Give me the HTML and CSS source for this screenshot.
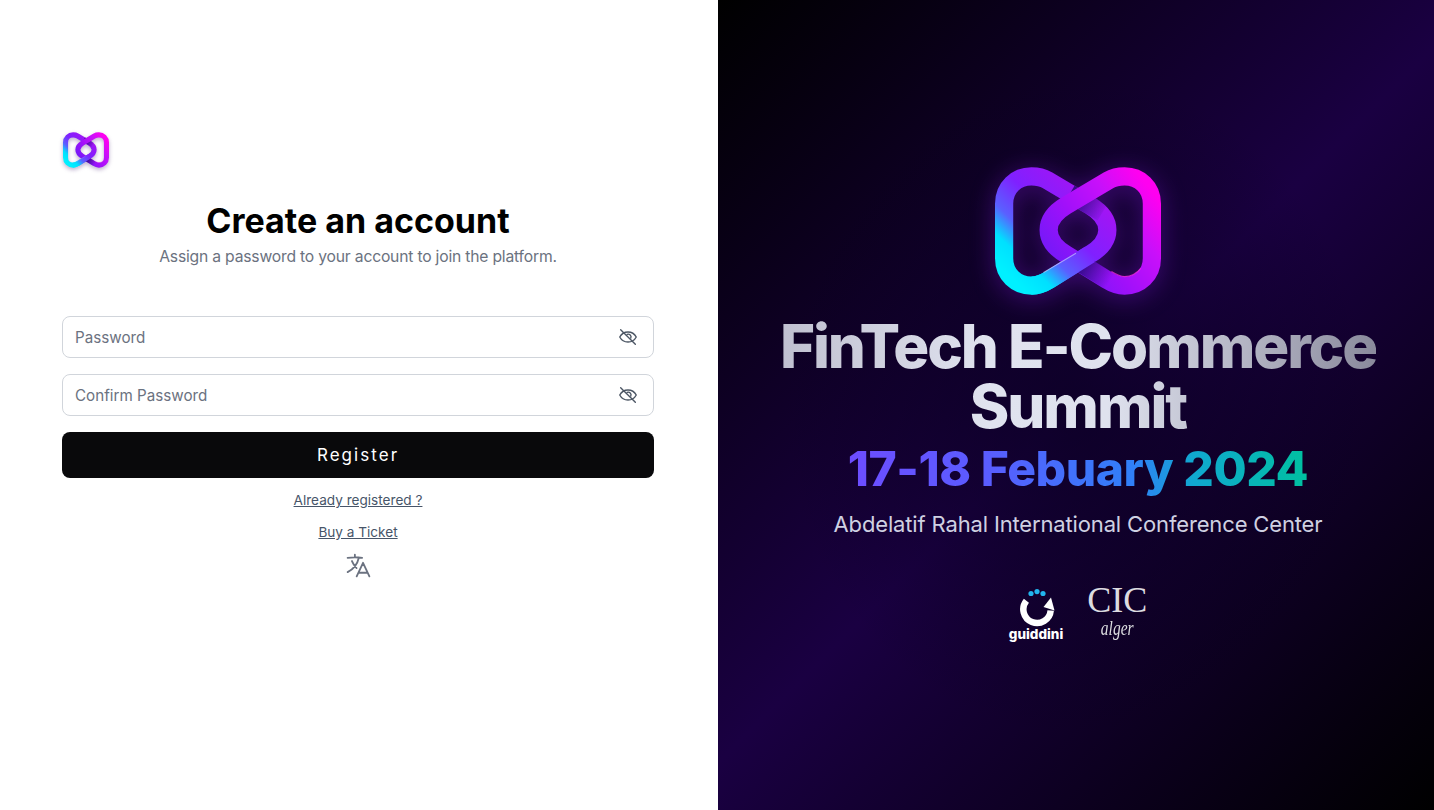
FILE: index.html
```html
<!DOCTYPE html>
<html lang="en">
<head>
  <meta charset="UTF-8" />
  <meta name="viewport" content="width=device-width, initial-scale=1.0"/>
  <title>Create an account</title>
  <link rel="stylesheet" href="styles.css">
</head>
<body>
  <svg class="defs" width="0" height="0">
    <defs>
      <linearGradient id="leftLoop" gradientUnits="userSpaceOnUse" x1="30" y1="125" x2="120" y2="30">
        <stop offset="0" stop-color="#00f0ff"/>
        <stop offset="0.16" stop-color="#00e0ff"/>
        <stop offset="0.32" stop-color="#5a60ff"/>
        <stop offset="0.55" stop-color="#8020ff"/>
        <stop offset="1" stop-color="#b010f0"/>
      </linearGradient>
      <linearGradient id="rightLoop" gradientUnits="userSpaceOnUse" x1="80" y1="110" x2="170" y2="40">
        <stop offset="0" stop-color="#7a18f8"/>
        <stop offset="0.32" stop-color="#a010fa"/>
        <stop offset="0.68" stop-color="#c810fa"/>
        <stop offset="1" stop-color="#ff00f0"/>
      </linearGradient>
      <linearGradient id="shadeTop" gradientUnits="userSpaceOnUse" x1="96" y1="48" x2="124" y2="66">
        <stop offset="0" stop-color="#240870" stop-opacity="0.85"/>
        <stop offset="1" stop-color="#240870" stop-opacity="0"/>
      </linearGradient>
      <linearGradient id="shadeBottom" gradientUnits="userSpaceOnUse" x1="102" y1="112" x2="130" y2="130">
        <stop offset="0" stop-color="#240870" stop-opacity="0.85"/>
        <stop offset="1" stop-color="#240870" stop-opacity="0"/>
      </linearGradient>
      <symbol id="logo" viewBox="16 18 164 126">
        <path fill="none" stroke="url(#leftLoop)" stroke-width="18" d="M25 54C25 38 37 27 52 27C58 27 63 28 68 31L110 56C120 62 127 70 127 80C127 90 120 98 110 104L70 129C62 134 58 135 52 135C37 135 25 124 25 108Z"/>
        <path fill="none" stroke="url(#shadeTop)" stroke-width="18" d="M90 44L122 63"/>
        <path fill="none" stroke="url(#rightLoop)" stroke-width="18" d="M171 54C171 38 159 27 144 27C138 27 133 28 128 31L86 56C76 62 69 70 69 80C69 90 76 98 86 104L126 129C134 134 138 135 144 135C159 135 171 124 171 108Z"/>
        <path fill="none" stroke="url(#shadeBottom)" stroke-width="18" d="M96 110L130 131"/>
        <path fill="none" stroke="#ff30e0" stroke-opacity="0.7" stroke-width="1.200" d="M131 121C136 124 140 126 144 126C150 126 156 123 160 118"/>
        <path fill="none" stroke="url(#leftLoop)" stroke-width="18" d="M52 135C58 135 62 134 70 129L110 104"/>
        <path fill="none" stroke="#e8d8ff" stroke-opacity="0.55" stroke-width="1" d="M64 122L96 103"/>
      </symbol>
      <symbol id="eyeOff" viewBox="0 0 24 24">
        <g fill="none" stroke="#4b5563" stroke-width="1.500" stroke-linecap="round" stroke-linejoin="round">
          <path d="M3 12c2-3.800 5-5.500 9-5.500s7 1.700 9 5.500c-2 3.800-5 5.500-9 5.500S5 15.800 3 12z"/>
          <path d="M11 9.200a3 3 0 0 1 4 4"/>
          <path d="M4 4l16 16"/>
        </g>
      </symbol>
    </defs>
  </svg>

  <main class="page">
    <section class="form-side">
      <svg class="logo-small"><use href="#logo"/></svg>
      <h1>Create an account</h1>
      <p class="subtitle">Assign a password to your account to join the platform.</p>

      <form class="form">
        <label class="field">
          <input type="password" placeholder="Password">
          <svg class="eye" viewBox="0 0 24 24"><use href="#eyeOff"/></svg>
        </label>
        <label class="field">
          <input type="password" placeholder="Confirm Password">
          <svg class="eye" viewBox="0 0 24 24"><use href="#eyeOff"/></svg>
        </label>
        <button type="button" class="register">Register</button>
      </form>

      <a class="link" href="#">Already registered ?</a>
      <a class="link" href="#">Buy a Ticket</a>
      <svg class="lang" viewBox="0 0 24 24" fill="none" stroke="#6b7280" stroke-width="1.500" stroke-linecap="round" stroke-linejoin="round">
        <path d="m10.500 21 5.250-11.250L21 21m-9-3h7.500M3 5.621a48.474 48.474 0 0 1 6-.371m0 0c1.120 0 2.233.038 3.334.114M9 5.250V3m3.334 2.364C11.176 10.658 7.690 15.080 3 17.502m9.334-12.138c.896.061 1.785.147 2.666.257m-4.589 8.495a18.023 18.023 0 0 1-3.827-5.802"/>
      </svg>
    </section>

    <section class="event-side">
      <svg class="logo-big"><use href="#logo"/></svg>
      <h2 class="event-title">FinTech E-Commerce<br>Summit</h2>
      <p class="event-date">17-18 Febuary 2024</p>
      <p class="event-place">Abdelatif Rahal International Conference Center</p>
      <div class="partners">
        <div class="guiddini">
          <svg class="guiddini-mark" viewBox="0 0 40 38">
            <circle cx="15" cy="4.500" r="2.600" fill="#22b5ee"/>
            <circle cx="21" cy="2.600" r="2.600" fill="#22b5ee"/>
            <circle cx="27" cy="4.500" r="2.600" fill="#22b5ee"/>
            <path fill="none" stroke="#fff" stroke-width="6.500" d="M10.400 11.700A13.700 13.700 0 1 0 34.700 21.500"/>
            <path fill="#fff" d="M27.500 18L35 8.500l3.500 13z"/>
          </svg>
          <span class="guiddini-name">guiddini</span>
        </div>
        <div class="cic">
          <span class="cic-name">CIC</span>
          <span class="cic-city">alger</span>
        </div>
      </div>
    </section>
  </main>
</body>
</html>
```

FILE: styles.css
```css
* {
  box-sizing: border-box;
}

body {
  margin: 0;
  background-color: #fff;
  font-family: Inter, "Liberation Sans", sans-serif;
}

.defs {
  position: absolute;
}

.page {
  display: grid;
  grid-template-columns: 718px 716px;
  height: 810px;
  overflow: hidden;
}

/* left side */
.form-side {
  display: flex;
  flex-direction: column;
  align-items: center;
  padding: 132px 64px 0 62px;
}

.logo-small {
  align-self: flex-start;
  width: 46px;
  height: 36px;
  margin-left: 1px;
  filter: drop-shadow(0 2px 2px rgba(60, 20, 110, 0.35));
}

h1 {
  margin: 32px 0 0;
  font-size: 34px;
  line-height: 42px;
  font-weight: 700;
  color: #000;
}

.subtitle {
  margin: 3px 0 0;
  font-size: 15.7px;
  letter-spacing: -0.2px;
  line-height: 24px;
  color: #6b7280;
}

.form {
  display: flex;
  flex-direction: column;
  gap: 16px;
  width: 100%;
  margin-top: 47px;
}

.field {
  display: flex;
  align-items: center;
  height: 42px;
  padding: 0 14px 0 12px;
  background-color: #fff;
  border: 1px solid #d1d5db;
  border-radius: 8px;
}

.field input {
  flex: 1;
  border: 0;
  outline: 0;
  padding: 0;
  font-family: inherit;
  font-size: 15.2px;
  color: #111827;
}

.field input::placeholder {
  color: #6b7280;
  opacity: 1;
}

.eye {
  width: 22px;
  height: 22px;
}

.register {
  height: 46px;
  border: 0;
  border-radius: 8px;
  background-color: #09090b;
  color: #fff;
  font-family: inherit;
  font-size: 17px;
  font-weight: 400;
  letter-spacing: 0.12em;
}

.link {
  margin-top: 12px;
  font-size: 13.6px;
  line-height: 20px;
  color: #475569;
}

.lang {
  width: 29px;
  height: 29px;
  margin-top: 9px;
}

/* right side */
.event-side {
  display: flex;
  flex-direction: column;
  align-items: center;
  justify-content: center;
  padding: 0 0 3px 4px;
  background-color: #000;
  background-image:
    radial-gradient(ellipse at center, rgba(8, 0, 28, 0.65), rgba(8, 0, 28, 0) 58%),
    linear-gradient(135deg, #000 0%, #1a0042 50%, #000 100%);
  text-align: center;
}

.logo-big {
  width: 166px;
  height: 128px;
  filter: drop-shadow(0 4px 12px rgba(150, 30, 255, 0.35));
}

.event-title {
  margin: 21px 0 0;
  font-size: 60px;
  line-height: 60px;
  font-weight: 800;
  letter-spacing: -2.1px;
  color: transparent;
  background-image: linear-gradient(90deg, #c0c0d0 0%, #e0e3ef 35%, #dfe2ee 55%, #8a8a9c 100%);
  -webkit-background-clip: text;
  background-clip: text;
}

.event-date {
  margin: 3px 0 0;
  font-size: 48px;
  line-height: 60px;
  font-weight: 800;
  letter-spacing: -0.45px;
  color: transparent;
  background-image: linear-gradient(90deg, #6d4dff 0%, #5a5cff 30%, #3080f8 62%, #10a8d0 75%, #00c0a0 100%);
  -webkit-background-clip: text;
  background-clip: text;
}

.event-place {
  margin: 9px 0 0;
  font-size: 22px;
  letter-spacing: -0.15px;
  line-height: 32px;
  color: #cfd1e2;
}

.partners {
  display: flex;
  align-items: flex-end;
  gap: 24px;
  margin-top: 45px;
}

.guiddini {
  display: flex;
  flex-direction: column;
  align-items: center;
}

.guiddini-mark {
  width: 40px;
  height: 38px;
}

.guiddini-name {
  font-size: 13.5px;
  line-height: 14px;
  font-weight: 800;
  color: #fff;
}

.cic {
  display: flex;
  flex-direction: column;
  align-items: center;
  color: #dcdce0;
}

.cic-name {
  font-family: "Liberation Serif", serif;
  font-size: 36px;
  line-height: 30px;
}

.cic-city {
  display: inline-block;
  font-family: "Liberation Serif", serif;
  font-style: italic;
  font-size: 15.5px;
  line-height: 26px;
  transform: scaleY(1.4);
}
```
